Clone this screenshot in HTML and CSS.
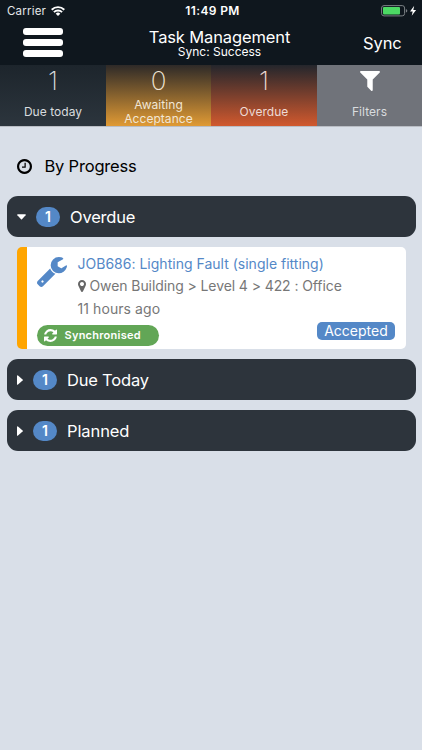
FILE: index.html
```html
<!DOCTYPE html>
<html lang="en">
<head>
<meta charset="utf-8">
<title>Task Management</title>
<link rel="stylesheet" href="styles.css">
</head>
<body>
<header class="top">
  <div class="status">
    <div class="carrier"><span>Carrier</span>
      <svg class="wifi" viewBox="0 0 14 10"><g fill="none" stroke="#fff" stroke-width="1.9"><path d="M.7 3.7a9 9 0 0 1 12.6 0"/><path d="M2.9 6.1a5.9 5.9 0 0 1 8.2 0"/></g><path fill="#fff" d="M4.7 7.7a3.3 3.3 0 0 1 4.6 0L7 10z"/></svg>
    </div>
    <div class="clock">11:49 PM</div>
    <svg class="battery" viewBox="0 0 37 12"><rect x=".6" y=".6" width="23" height="10.3" rx="2.4" fill="none" stroke="#7b8085"/><rect x="2" y="2" width="17" height="7.5" rx="1" fill="#4cd964"/><path d="M24.9 4v3.6q1.4-.4 1.4-1.8T24.9 4z" fill="#7b8085"/><path d="M33.2.8 29 6.4h2.7l-1 4.4 4.4-5.8h-2.8z" fill="#fff"/></svg>
  </div>
  <div class="nav">
    <div class="menu"><i></i><i></i><i></i></div>
    <div class="heading"><h1>Task Management</h1><p>Sync: Success</p></div>
    <div class="sync">Sync</div>
  </div>
</header>
<section class="tabs">
  <div class="tab due"><b>1</b><span>Due today</span></div>
  <div class="tab awaiting"><b>0</b><span>Awaiting<br>Acceptance</span></div>
  <div class="tab overdue"><b>1</b><span>Overdue</span></div>
  <div class="tab filters"><svg viewBox="192 256 1408 1408"><path fill="#fff" d="M1595 295q17 41-14 70l-493 493v742q0 42-39 59-13 5-25 5-27 0-45-19l-256-256q-19-19-19-45v-486l-493-493q-31-29-14-70 17-39 59-39h1280q42 0 59 39z"/></svg><span>Filters</span></div>
</section>
<main>
  <div class="sort"><svg viewBox="128 128 1536 1536"><path d="M1024 544v448q0 14-9 23t-23 9h-320q-14 0-23-9t-9-23v-64q0-14 9-23t23-9h224v-352q0-14 9-23t23-9h64q14 0 23 9t9 23zm416 352q0-148-73-273t-198-198-273-73-273 73-198 198-73 273 73 273 198 198 273 73 273-73 198-198 73-273zm224 0q0 209-103 385.5t-279.5 279.5-385.5 103-385.5-103-279.5-279.5-103-385.5 103-385.5 279.5-279.5 385.5-103 385.5 103 279.5 279.5 103 385.5z"/></svg><span>By Progress</span></div>
  <div class="group open"><svg class="caret" viewBox="0 0 10 6"><path d="M.8 0h8.4q1 .2.4 1L5.5 5.6q-.5.5-1 0L.4 1Q-.2.2.8 0z"/></svg><span class="count">1</span><span class="name name-overdue">Overdue</span></div>
  <article class="card">
    <svg class="wrench" viewBox="85 128 1641 1643"><path d="M448 1472q0-26-19-45t-45-19-45 19-19 45 19 45 45 19 45-19 19-45zm644-420l-682 682q-37 37-90 37-52 0-91-37l-106-108q-38-36-38-90 0-53 38-91l681-681q39 98 114.500 173.500t173.500 114.500zm634-435q0 39-23 106-47 134-164.500 217.500t-258.500 83.500q-185 0-316.500-131.500t-131.500-316.500 131.500-316.500 316.500-131.500q58 0 121.500 16.500t107.500 46.500q16 11 16 28t-16 28l-293 169v224l193 107q5-3 79-48.500t135.500-81 70.500-35.500q15 0 23.500 10t8.500 25z"/></svg>
    <div class="info">
      <h2>JOB686: Lighting Fault (single fitting)</h2>
      <p class="place"><svg viewBox="384 128 1024 1536"><path d="M1152 640q0-106-75-181t-181-75-181 75-75 181 75 181 181 75 181-75 75-181zm256 0q0 109-33 179l-364 774q-16 33-47.500 52t-67.500 19-67.500-19-46.500-52l-365-774q-33-70-33-179 0-212 150-362t362-150 362 150 150 362z"/></svg><span>Owen Building &gt; Level 4 &gt; 422 : Office</span></p>
      <p class="age">11 hours ago</p>
    </div>
    <div class="badges">
      <span class="synced"><svg viewBox="128 128 1536 1536"><path d="M1639 1056q0 5-1 7-64 268-268 434.500t-478 166.500q-146 0-282.500-55t-243.500-157l-129 129q-19 19-45 19t-45-19-19-45v-448q0-26 19-45t45-19h448q26 0 45 19t19 45-19 45l-137 137q71 66 161 102t187 36q134 0 250-65t186-179q11-17 53-117 8-23 30-23h192q13 0 22.500 9.500t9.500 22.500zm25-800v448q0 26-19 45t-45 19h-448q-26 0-45-19t-19-45 19-45l138-138q-148-137-349-137-134 0-250 65t-186 179q-11 17-53 117-8 23-30 23h-199q-13 0-22.500-9.500t-9.500-22.500v-7q65-268 270-434.500t480-166.500q146 0 284 55.500t245 156.500l130-129q19-19 45-19t45 19 19 45z"/></svg><span>Synchronised</span></span>
      <span class="accepted">Accepted</span>
    </div>
  </article>
  <div class="group"><svg class="caret" viewBox="0 0 6 10"><path d="M0 .8v8.400q.2 1 1 .4L5.600 5.500q.5-.5 0-1L1 .4Q.2-.2 0 .8z"/></svg><span class="count">1</span><span class="name name-today">Due Today</span></div>
  <div class="group"><svg class="caret" viewBox="0 0 6 10"><path d="M0 .8v8.400q.2 1 1 .4L5.600 5.500q.5-.5 0-1L1 .4Q.2-.2 0 .8z"/></svg><span class="count">1</span><span class="name name-planned">Planned</span></div>
</main>
</body>
</html>
```
FILE: styles.css
```css
* { box-sizing: border-box; }
body { margin: 0; height: 750px; background: #d9dfe8; font-family: Inter, "Liberation Sans", sans-serif; overflow: hidden; }
h1, h2, p { margin: 0; font-weight: 400; }
span, h1, h2, p { white-space: nowrap; }
svg { display: block; flex: none; }

.top { height: 65px; background: #0f171e; color: #fff; }
.status { height: 22px; display: grid; grid-template-columns: 1fr auto 1fr; align-items: center; padding: 0 4px 0 7px; }
.carrier { display: flex; align-items: center; gap: 5px; font-size: 11.5px; letter-spacing: .2px; color: #e4e6e8; }
.wifi { width: 14px; height: 10px; }
.clock { font-size: 12px; font-weight: 600; line-height: 22px; letter-spacing: .35px; }
.battery { width: 37px; height: 12px; justify-self: end; }
.nav { height: 43px; display: grid; grid-template-columns: 110px 202px 110px; }
.menu { margin: 6px 0 0 23px; width: 40px; display: flex; flex-direction: column; gap: 4px; }
.menu i { height: 7px; border-radius: 3px; background: #fff; }
.heading { text-align: center; padding-left: 17px; }
.heading h1 { font-size: 16.5px; line-height: 18px; padding-top: 6px; letter-spacing: -.13px; }
.heading p { font-size: 12px; line-height: 12px; }
.sync { font-size: 16.5px; line-height: 43px; padding-left: 51px; letter-spacing: -.1px; }

.tabs { height: 62px; display: grid; grid-template-columns: 106px 105px 106px 105px; border-bottom: 1px solid #b9bdc4; color: #d9dcdf; }
.tab { display: flex; flex-direction: column; align-items: center; text-align: center; }
.tab b { font-size: 26px; font-weight: 200; line-height: 31px; }
.tab span { font-size: 12px; line-height: 14px; letter-spacing: .05px; }
.tab b + span, .filters span { margin-top: 9px; }
.due { background: linear-gradient(#1d252c, #2c353d); }
.awaiting { background: linear-gradient(#2e2a28, #e09a34); color: #f1e6d5; }
.tab.awaiting span { margin-top: 2px; }
.overdue { background: linear-gradient(#24262c, #d1592e); color: #eedbd5; }
.filters { background: #70737a; }
.filters svg { width: 20px; height: 20px; margin: 6px 0 5px; }

main { padding: 0 6.5px; }
.sort { height: 69px; padding: 9px 0 0 10px; display: flex; align-items: center; gap: 13px; font-size: 16.5px; letter-spacing: -.2px; color: #000; }
.sort svg { width: 15px; height: 15px; }
.group { height: 41px; margin-bottom: 10px; border-radius: 11px; background: #2d343c; color: #fff; display: flex; align-items: center; padding-left: 10.5px; }
.caret { width: 6px; height: 10px; fill: #fff; }
.open .caret { width: 9px; height: 6px; }
.count { width: 24px; height: 20px; margin: 0 10px; border-radius: 10px; background: #5488c7; font-size: 14px; font-weight: 600; line-height: 20px; text-align: center; }
.name { font-size: 16.5px; letter-spacing: -.2px; }
.name-planned { letter-spacing: -.1px; }

.card { margin: 0 10px; margin-bottom: 10px; height: 102px; border-left: 10.5px solid #ffa500; border-radius: 5px; background: #fff; display: grid; grid-template-columns: 51px 1fr; grid-template-rows: 78px 24px; color: #777; }
.wrench { width: 30px; height: 30px; margin: 10px 0 0 10px; fill: #5488c7; }
.info { padding-top: 6px; font-size: 14px; line-height: 22.300px; }
.info h2 { font-size: 14px; line-height: 22.300px; letter-spacing: .01px; color: #5488c7; }
.place { display: flex; align-items: center; gap: 4px; letter-spacing: -.09px; }
.place svg { width: 8px; height: 12px; fill: #666; }
.age { letter-spacing: .08px; }
.badges { grid-column: 1 / 3; display: flex; justify-content: space-between; padding: 0 10.5px 0 10px; }
.synced { width: 122px; height: 21px; border-radius: 11px; background: #62a656; color: #fff; display: flex; align-items: center; gap: 8px; padding: 0 0 1px 7px; font-size: 11px; font-weight: 600; letter-spacing: .25px; }
.synced svg { width: 13px; height: 13px; fill: #fff; }
.accepted { width: 78px; height: 18px; margin-top: -3px; border-radius: 5px; background: #5488c7; color: #fff; font-size: 14px; line-height: 18px; text-align: center; }
```
